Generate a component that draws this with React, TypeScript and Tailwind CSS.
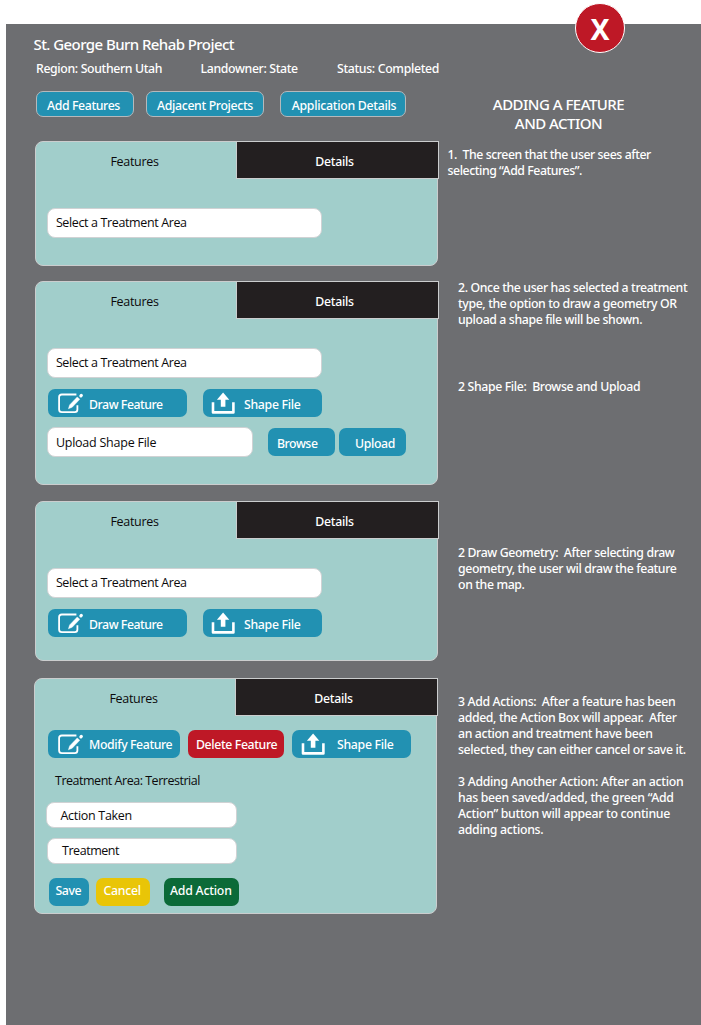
import type { ReactNode } from "react";
import { clsx } from "clsx";

const light = "font-['Noto_Sans','Open_Sans',sans-serif] text-white";
const dark = "font-['Open_Sans','Noto_Sans',sans-serif] text-[#0c0a0b]";

function EditIcon() {
  return (
    <svg viewBox="0 0 26 21" className="h-[21px] w-[26px] shrink-0" fill="none" stroke="white">
      <path d="M18.4 1.5H3.8Q1.1 1.5 1.1 4.1V16.6Q1.1 19.2 3.8 19.2H16.8Q19.4 19.2 19.4 16.6V12.2" strokeWidth="1.8" />
      <path d="M10.4 15.8L11.6 11.9L19.2 4L21.8 6.3L14.2 14.3Z" fill="white" stroke="white" strokeWidth="0.4" />
      <path d="M22.9 2.8L23.3 2.4" strokeWidth="3.2" strokeLinecap="round" />
    </svg>
  );
}

function ShareIcon() {
  return (
    <svg viewBox="0 0 24 22" className="h-[22px] w-6 shrink-0" fill="none" stroke="white">
      <path d="M2 10.2V20.4H22.4V10.2" strokeWidth="2.6" strokeLinejoin="round" />
      <path d="M12.1 0.4L18.3 7.8H14.4V14.8H9.8V7.8H5.9Z" fill="white" stroke="none" />
    </svg>
  );
}

function Button({ className, children }: { className: string; children: ReactNode }) {
  return (
    <button className={clsx("flex h-7 shrink-0 items-center rounded-[7px] text-[12.3px] font-medium whitespace-nowrap", light, className)}>
      {children}
    </button>
  );
}

function Field({ className, children }: { className: string; children: ReactNode }) {
  return (
    <div className={clsx("flex shrink-0 items-center rounded-lg border border-[#d0d2d4] bg-white text-[12.5px] whitespace-nowrap", dark, className)}>
      {children}
    </div>
  );
}

function Panel({ className, children }: { className: string; children: ReactNode }) {
  return (
    <section className={clsx("w-[403px] rounded-lg border border-[#cbcdce] bg-[#a1cecb]", className)}>
      <div className="-mt-px -mr-0.5 flex h-[38px]">
        <div className={clsx("flex flex-1 items-center justify-center pt-[5px] pr-[3px] text-[12.5px] tracking-[-0.3px]", dark)}>
          Features
        </div>
        <div className={clsx("flex w-[203px] items-center justify-center border border-[#cbcdce] bg-[#231f20] pt-[5px] pr-[6px] text-[12.3px] font-medium tracking-[-0.3px]", light)}>
          Details
        </div>
      </div>
      {children}
    </section>
  );
}

function TreatmentSelect() {
  return <Field className="mt-[29px] ml-[11.4px] h-[30px] w-[274.5px] pl-[7.5px] tracking-[-0.37px]">Select a Treatment Area</Field>;
}

function FeatureButtons() {
  return (
    <div className="mt-[11px] ml-3 flex gap-4">
      <Button className="w-[139px] bg-[#2291b2] pl-[10px] tracking-[-0.45px]">
        <EditIcon />
        <span className="pt-1 pl-[5px]">Draw Feature</span>
      </Button>
      <Button className="w-[119px] bg-[#2291b2] pl-2 tracking-[-0.31px]">
        <ShareIcon />
        <span className="pt-1 pl-[9px]">Shape File</span>
      </Button>
    </div>
  );
}

function Note({ className, lines }: { className: string; lines: string[] }) {
  return (
    <div className={clsx("text-[12.3px] leading-4 font-medium whitespace-pre", light, className)}>
      {lines.map((line) => (
        <p key={line}>{line}</p>
      ))}
    </div>
  );
}

export default function App() {
  return (
    <div className="h-[1025px] overflow-hidden bg-white pt-6 pl-1.5">
      <main className="relative flex h-[1001px] bg-[#6d6e71]">
        <button
          aria-label="Close"
          className={clsx("absolute -top-[21px] left-[569px] flex size-[50px] items-center justify-center rounded-full border border-white bg-[#be1826] text-[28.5px] font-bold", light)}
        >
          <span className="pt-[2px]">X</span>
        </button>

        <div className="w-[436px] shrink-0">
          <header className={clsx("pt-[9px] font-medium whitespace-nowrap", light)}>
            <h1 className="pl-[27.5px] text-[15px] leading-[22px] tracking-[-0.57px]">St. George Burn Rehab Project</h1>
            <div className="flex pt-[5px] pl-[30px] text-[12.3px] leading-[18px]">
              <span className="w-[164.5px] tracking-[-0.36px]">Region: Southern Utah</span>
              <span className="w-[136.5px] tracking-[-0.35px]">Landowner: State</span>
              <span className="tracking-[-0.34px]">Status: Completed</span>
            </div>
            <nav className="mt-[13px] ml-[30px] flex">
              <Button className="h-[26px] w-[98px] justify-center border border-[#b5b9bc] bg-[#2291b2] pt-[5px] pr-[3px] tracking-[-0.39px]">Add Features</Button>
              <Button className="ml-3 h-[26px] w-[118px] justify-center border border-[#b5b9bc] bg-[#2291b2] pt-[5px] tracking-[-0.35px]">Adjacent Projects</Button>
              <Button className="ml-4 h-[26px] w-[126px] justify-center border border-[#b5b9bc] bg-[#2291b2] pt-[5px] pl-[2px] tracking-[-0.28px]">Application Details</Button>
            </nav>
          </header>

          <Panel className="mt-6 ml-[29px] h-[125px]">
            <TreatmentSelect />
          </Panel>

          <Panel className="mt-[15px] ml-[29px] h-[204px]">
            <TreatmentSelect />
            <FeatureButtons />
            <div className="mt-[10px] ml-[11.4px] flex items-start">
              <Field className="h-[30px] w-[206px] pt-[2px] pl-[7.5px] tracking-[-0.24px]">Upload Shape File</Field>
              <Button className="mt-px ml-[14.6px] w-[67px] bg-[#2291b2] pt-[4px] pl-[9px] tracking-[-0.45px]">Browse</Button>
              <Button className="mt-px ml-[4.5px] w-[67px] bg-[#2291b2] pt-[4px] pl-[15.5px] tracking-[-0.35px]">Upload</Button>
            </div>
          </Panel>

          <Panel className="mt-4 ml-[29px] h-[160px]">
            <TreatmentSelect />
            <FeatureButtons />
          </Panel>

          <Panel className="mt-[17px] ml-7 h-[236px]">
            <div className="mt-[14px] ml-[13px] flex">
              <Button className="w-[132px] bg-[#2291b2] pl-[10px] tracking-[-0.4px]">
                <EditIcon />
                <span className="pt-[3px] pl-[5px]">Modify Feature</span>
              </Button>
              <Button className="ml-2 w-24 bg-[#be1826] pt-[3px] pl-2 tracking-[-0.37px]">Delete Feature</Button>
              <Button className="ml-2 w-[119px] bg-[#2291b2] pl-[9px] tracking-[-0.31px]">
                <ShareIcon />
                <span className="pt-[3px] pl-3">Shape File</span>
              </Button>
            </div>
            <p className={clsx("mt-[14px] ml-5 text-[12.5px] leading-[18px] tracking-[-0.48px]", dark)}>Treatment Area: Terrestrial</p>
            <Field className="mt-3 ml-[11px] h-[26px] w-[191px] pt-[2px] pl-[13.5px] tracking-[-0.3px]">Action Taken</Field>
            <Field className="mt-[10px] ml-3 h-[26px] w-[190px] pl-[14px] tracking-[-0.45px]">Treatment</Field>
            <div className="mt-[14px] ml-[14px] flex">
              <Button className="w-10 bg-[#2291b2] pb-px pl-[6.5px] tracking-[-0.45px]">Save</Button>
              <Button className="ml-[7px] w-[54px] bg-[#e9c507] pb-px pl-[7.5px] tracking-[-0.3px]">Cancel</Button>
              <Button className="ml-[14px] w-[75px] bg-[#0b6a38] pb-px pl-[6px] tracking-[-0.22px]">Add Action</Button>
            </div>
          </Panel>
        </div>

        <aside className="w-[259px] shrink-0">
          <h2 className={clsx("pt-[71px] pr-[26px] text-center text-[15px] leading-[19px] font-medium tracking-[-0.52px] whitespace-nowrap", light)}>
            <span className="block">ADDING A FEATURE</span>
            <span className="block">AND ACTION</span>
          </h2>
          <Note className="mt-[14px] ml-[5.5px] tracking-[-0.44px]" lines={["1.  The screen that the user sees after", "selecting “Add Features”."]} />
          <Note
            className="mt-[101px] ml-4 tracking-[-0.38px]"
            lines={["2. Once the user has selected a treatment", "type, the option to draw a geometry OR", "upload a shape file will be shown."]}
          />
          <Note className="mt-[51px] ml-4 tracking-[-0.36px]" lines={["2 Shape File:  Browse and Upload"]} />
          <Note
            className="mt-[150px] ml-4 tracking-[-0.38px]"
            lines={["2 Draw Geometry:  After selecting draw", "geometry, the user wil draw the feature", "on the map."]}
          />
          <Note
            className="mt-[101px] ml-4 tracking-[-0.37px]"
            lines={["3 Add Actions:  After a feature has been", "added, the Action Box will appear.  After", "an action and treatment have been", "selected, they can either cancel or save it."]}
          />
          <Note
            className="mt-4 ml-4 tracking-[-0.3px]"
            lines={["3 Adding Another Action: After an action", "has been saved/added, the green “Add", "Action” button will appear to continue", "adding actions."]}
          />
        </aside>
      </main>
    </div>
  );
}
